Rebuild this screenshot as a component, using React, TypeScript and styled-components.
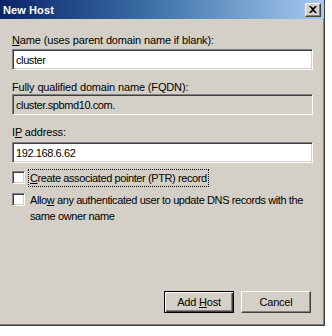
import React from "react";
import styled, { createGlobalStyle } from "styled-components";

const Global = createGlobalStyle`
  html, body { margin: 0; padding: 0; background: #ffffff; }
  body { font-family: Tahoma, "Liberation Sans", Arial, sans-serif; font-size: 11px; color: #000; }
`;

const Window = styled.div`
  width: 325px;
  height: 326px;
  box-sizing: border-box;
  background: #d4d0c8;
  border-right: 1px solid #404040;
  border-bottom: 1px solid #404040;
  box-shadow: inset -1px -1px 0 #808080;
  display: flex;
  flex-direction: column;
`;

const TitleBar = styled.div`
  height: 19px;
  background: linear-gradient(to right, #0a246a 0%, #3a6ea5 45%, #a6caf0 100%);
  display: flex;
  align-items: center;
  justify-content: space-between;
  padding: 0 3px 0 3px;
`;

const Title = styled.span`
  color: #fff;
  font-weight: bold;
  font-size: 11px;
  letter-spacing: 0.1px;
`;

const CloseButton = styled.div`
  width: 16px;
  height: 14px;
  box-sizing: border-box;
  background: #d4d0c8;
  border-top: 1px solid #fff;
  border-left: 1px solid #fff;
  border-right: 1px solid #404040;
  border-bottom: 1px solid #404040;
  box-shadow: inset -1px -1px 0 #808080;
  display: flex;
  align-items: center;
  justify-content: center;
`;

const Body = styled.div`
  flex: 1;
  display: flex;
  flex-direction: column;
  padding: 15px 12px 12px 12px;
`;

const Label = styled.div<{ $top: number }>`
  margin-top: ${(p) => p.$top}px;
  line-height: 13px;
  height: 13px;
  white-space: nowrap;
  letter-spacing: -0.15px;
`;

const Field = styled.div<{ $disabled?: boolean; $top: number }>`
  margin-top: ${(p) => p.$top}px;
  height: 21px;
  box-sizing: border-box;
  background: ${(p) => (p.$disabled ? "#d4d0c8" : "#fff")};
  border-top: 1px solid #808080;
  border-left: 1px solid #808080;
  border-right: 1px solid #fff;
  border-bottom: 1px solid #fff;
  box-shadow: inset 1px 1px 0 #404040, inset -1px -1px 0 #d4d0c8;
  display: flex;
  align-items: center;
  padding-left: 3px;
  width: 301px;
  letter-spacing: -0.4px;
  white-space: nowrap;
`;

const CheckRow = styled.div<{ $top: number }>`
  margin-top: ${(p) => p.$top}px;
  display: flex;
  align-items: flex-start;
  gap: 4px;
`;

const Box = styled.div`
  width: 13px;
  height: 13px;
  flex: none;
  box-sizing: border-box;
  background: #fff;
  border-top: 1px solid #808080;
  border-left: 1px solid #808080;
  border-right: 1px solid #fff;
  border-bottom: 1px solid #fff;
  box-shadow: inset 1px 1px 0 #404040, inset -1px -1px 0 #d4d0c8;
`;

const CheckText = styled.span<{ $focus?: boolean }>`
  line-height: 16px;
  margin-top: -1px;
  padding: 0 1px;
  white-space: nowrap;
  letter-spacing: -0.4px;
  outline: ${(p) => (p.$focus ? "1px dotted #000" : "none")};
`;

const Spacer = styled.div`
  flex: 1;
`;

const ButtonRow = styled.div`
  display: flex;
  justify-content: flex-end;
  gap: 7px;
  padding-right: 1px;
`;

const Button = styled.div<{ $default?: boolean }>`
  width: 70px;
  height: 22px;
  box-sizing: border-box;
  display: flex;
  align-items: center;
  justify-content: center;
  background: #d4d0c8;
  letter-spacing: -0.2px;
  border: 1px solid;
  border-color: ${(p) => (p.$default ? "#000" : "#fff #404040 #404040 #fff")};
  box-shadow: ${(p) =>
    p.$default
      ? "inset 1px 1px 0 #fff, inset -1px -1px 0 #404040, inset -2px -2px 0 #808080"
      : "inset -1px -1px 0 #808080"};
`;

const U = styled.span`
  text-decoration: underline;
`;

export default function App() {
  return (
    <>
      <Global />
      <Window>
        <TitleBar>
          <Title>New Host</Title>
          <CloseButton>
            <svg width="8" height="7" viewBox="0 0 8 7">
              <path d="M0 0h2l2 2 2-2h2L5 3.5 8 7H6L4 5 2 7H0l3-3.5z" fill="#000" />
            </svg>
          </CloseButton>
        </TitleBar>
        <Body>
          <Label $top={0}>
            <U>N</U>ame (uses parent domain name if blank):
          </Label>
          <Field $top={2}>cluster</Field>
          <Label $top={11}>Fully qualified domain name (FQDN):</Label>
          <Field $top={0} $disabled>
            cluster.spbmd10.com.
          </Field>
          <Label $top={11}>
            I<U>P</U> address:
          </Label>
          <Field $top={3}>192.168.6.62</Field>
          <CheckRow $top={8}>
            <Box />
            <CheckText $focus>
              <U>C</U>reate associated pointer (PTR) record
            </CheckText>
          </CheckRow>
          <CheckRow $top={7}>
            <Box />
            <CheckText>
              Allo<U>w</U> any authenticated user to update DNS records with the
              <br />
              same owner name
            </CheckText>
          </CheckRow>
          <Spacer />
          <ButtonRow>
            <Button $default>
              <span>
                Add <U>H</U>ost
              </span>
            </Button>
            <Button>Cancel</Button>
          </ButtonRow>
        </Body>
      </Window>
    </>
  );
}
